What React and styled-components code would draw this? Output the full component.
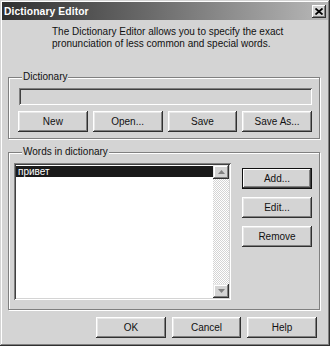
import React from 'react';
import styled, { createGlobalStyle } from 'styled-components';

const GlobalStyle = createGlobalStyle`
  html, body {
    margin: 0;
    padding: 0;
    background: #d4d4d4;
  }
  * {
    box-sizing: border-box;
  }
`;

const Window = styled.div`
  width: 330px;
  height: 346px;
  padding: 2px;
  display: flex;
  flex-direction: column;
  background: #d4d4d4;
  font-family: 'Liberation Sans', Arial, sans-serif;
  font-size: 10px;
  color: #111;
  box-shadow: inset -1px -1px #303030, inset 1px 1px #d4d4d4,
    inset -2px -2px #808080, inset 2px 2px #ffffff;
`;

const TitleBar = styled.div`
  height: 18px;
  display: flex;
  align-items: center;
  justify-content: space-between;
  padding: 0 2px 0 2px;
  background: linear-gradient(to right, #303030 0%, #6a6a6a 45%, #b8b8b8 100%);
`;

const Title = styled.span`
  color: #fff;
  font-weight: bold;
  font-size: 10.3px;
  letter-spacing: 0.1px;
`;

const CloseButton = styled.button`
  width: 14px;
  height: 13px;
  padding: 0;
  border: none;
  display: flex;
  align-items: center;
  justify-content: center;
  background: #d4d4d4;
  box-shadow: inset -1px -1px #303030, inset 1px 1px #ffffff,
    inset -2px -2px #808080;
`;

const Description = styled.p`
  margin: 6px 0 0 50px;
  line-height: 12px;
  font-size: 10px;
`;

const Group = styled.fieldset`
  margin: ${(p) => p.$top}px 8px 0 6px;
  padding: 5px 7px ${(p) => p.$bottom}px 9px;
  border: 1px solid #808080;
  box-shadow: inset 1px 1px #ffffff, 1px 1px #ffffff;
  min-width: 0;
`;

const Legend = styled.legend`
  padding: 0 1px;
  margin-left: 4px;
  line-height: 12px;
  background: #d4d4d4;
`;

const Field = styled.div`
  height: 17px;
  margin-left: 1px;
  background: #d4d4d4;
  box-shadow: inset 1px 1px #808080, inset -1px -1px #ffffff,
    inset 2px 2px #404040, inset -2px -2px #d4d4d4;
`;

const ButtonGrid = styled.div`
  margin-top: 6px;
  display: grid;
  grid-template-columns: repeat(4, 1fr);
  gap: 5px;
`;

const Button = styled.button`
  height: ${(p) => (p.$tall ? 21 : 20)}px;
  width: ${(p) => (p.$w ? `${p.$w}px` : 'auto')};
  padding: 0;
  border: none;
  background: #d4d4d4;
  font-family: 'Liberation Sans', Arial, sans-serif;
  font-size: 10px;
  color: #111;
  box-shadow: ${(p) =>
    p.$default
      ? 'inset 0 0 0 1px #111, inset -2px -2px #404040, inset 2px 2px #ffffff, inset -3px -3px #808080'
      : 'inset -1px -1px #303030, inset 1px 1px #ffffff, inset -2px -2px #808080, inset 2px 2px #e8e8e8'};
`;

const WordsRow = styled.div`
  display: flex;
  gap: 11px;
  align-items: flex-start;
`;

const ListBox = styled.div`
  width: 218px;
  height: 137px;
  margin-left: -4px;
  padding: 2px;
  display: flex;
  background: #fff;
  box-shadow: inset 1px 1px #808080, inset -1px -1px #ffffff,
    inset 2px 2px #404040, inset -2px -2px #d4d4d4;
`;

const ListItems = styled.div`
  flex: 1;
  padding-top: 1px;
`;

const ListItem = styled.div`
  height: 11px;
  line-height: 11px;
  padding-left: 2px;
  background: ${(p) => (p.$selected ? '#1a1a1a' : 'transparent')};
  color: ${(p) => (p.$selected ? '#fff' : '#111')};
`;

const ScrollBar = styled.div`
  width: 16px;
  display: flex;
  flex-direction: column;
  justify-content: space-between;
  background-color: #ececec;
  background-image: repeating-conic-gradient(#ffffff 0% 25%, #d4d4d4 0% 50%);
  background-size: 2px 2px;
`;

const ScrollArrow = styled.div`
  height: 14px;
  display: flex;
  align-items: center;
  justify-content: center;
  background: #d4d4d4;
  box-shadow: inset -1px -1px #303030, inset 1px 1px #e8e8e8,
    inset -2px -2px #808080, inset 2px 2px #ffffff;
`;

const SideButtons = styled.div`
  margin-top: 5px;
  display: flex;
  flex-direction: column;
  gap: 8px;
`;

const Footer = styled.div`
  margin-top: 7px;
  padding-right: 11px;
  display: flex;
  justify-content: flex-end;
  gap: 6px;
`;

function Arrow({ up }) {
  return (
    <svg width="7" height="4" viewBox="0 0 7 4">
      <path d={up ? 'M3.5 0 L7 4 L0 4 Z' : 'M0 0 L7 0 L3.5 4 Z'} fill="#808080" />
    </svg>
  );
}

export default function App() {
  return (
    <>
      <GlobalStyle />
      <Window>
        <TitleBar>
          <Title>Dictionary Editor</Title>
          <CloseButton aria-label="Close">
            <svg width="8" height="7" viewBox="0 0 8 7">
              <path d="M0.5 0.5 L7.5 6.5 M7.5 0.5 L0.5 6.5" stroke="#000" strokeWidth="1.8" />
            </svg>
          </CloseButton>
        </TitleBar>
        <Description>
          The Dictionary Editor allows you to specify the exact
          <br />
          pronunciation of less common and special words.
        </Description>

        <Group $top={21} $bottom={6}>
          <Legend>Dictionary</Legend>
          <Field />
          <ButtonGrid>
            <Button $tall>New</Button>
            <Button $tall>Open...</Button>
            <Button $tall>Save</Button>
            <Button $tall>Save As...</Button>
          </ButtonGrid>
        </Group>

        <Group $top={7} $bottom={9}>
          <Legend>Words in dictionary</Legend>
          <WordsRow>
            <ListBox>
              <ListItems>
                <ListItem $selected>привет</ListItem>
              </ListItems>
              <ScrollBar>
                <ScrollArrow>
                  <Arrow up />
                </ScrollArrow>
                <ScrollArrow>
                  <Arrow />
                </ScrollArrow>
              </ScrollBar>
            </ListBox>
            <SideButtons>
              <Button $tall $default $w={70}>Add...</Button>
              <Button $tall $w={70}>Edit...</Button>
              <Button $tall $w={70}>Remove</Button>
            </SideButtons>
          </WordsRow>
        </Group>

        <Footer>
          <Button $tall $w={70}>OK</Button>
          <Button $tall $w={69}>Cancel</Button>
          <Button $tall $w={70}>Help</Button>
        </Footer>
      </Window>
    </>
  );
}
